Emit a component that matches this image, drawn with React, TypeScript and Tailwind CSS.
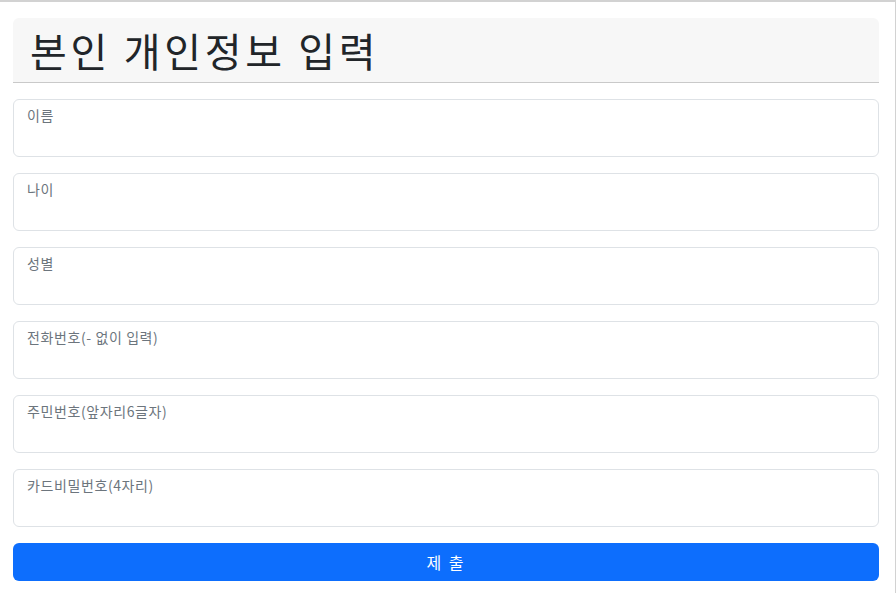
import React from 'react';

const fields = [
  '이름',
  '나이',
  '성별',
  '전화번호(- 없이 입력)',
  '주민번호(앞자리6글자)',
  '카드비밀번호(4자리)',
];

export default function App() {
  return (
    <div
      className="h-[593px] w-full border-t-2 border-r border-[#d2d2d2] bg-white"
      style={{ fontFamily: '"Noto Sans CJK KR", "Noto Sans", sans-serif' }}
    >
      <div className="pl-[13px] pr-[16px] pt-[16px]">
        <div className="h-[65px] rounded-t-md border-b border-[#c9c9c9] bg-[#f7f7f7] pl-[17px]">
          <h1 className="pt-[5px] text-[40px] leading-[54px] tracking-[3.7px] text-[#212529]">
            본인 개인정보 입력
          </h1>
        </div>

        <form className="mt-[16px] flex flex-col gap-[16px]" onSubmit={(e) => e.preventDefault()}>
          {fields.map((f) => (
            <textarea
              key={f}
              placeholder={f}
              className="h-[58px] w-full resize-none rounded-md border border-[#dee2e6] bg-white pl-[13px] pt-[5px] text-[14px] leading-[21px] tracking-[0.6px] text-[#212529] outline-none placeholder:text-[#6c757d]"
            />
          ))}
          <button
            type="submit"
            className="h-[38px] w-full rounded-md bg-[#0d6efd] text-[16px] tracking-[2px] text-white"
          >
            제 출
          </button>
        </form>
      </div>
    </div>
  );
}
